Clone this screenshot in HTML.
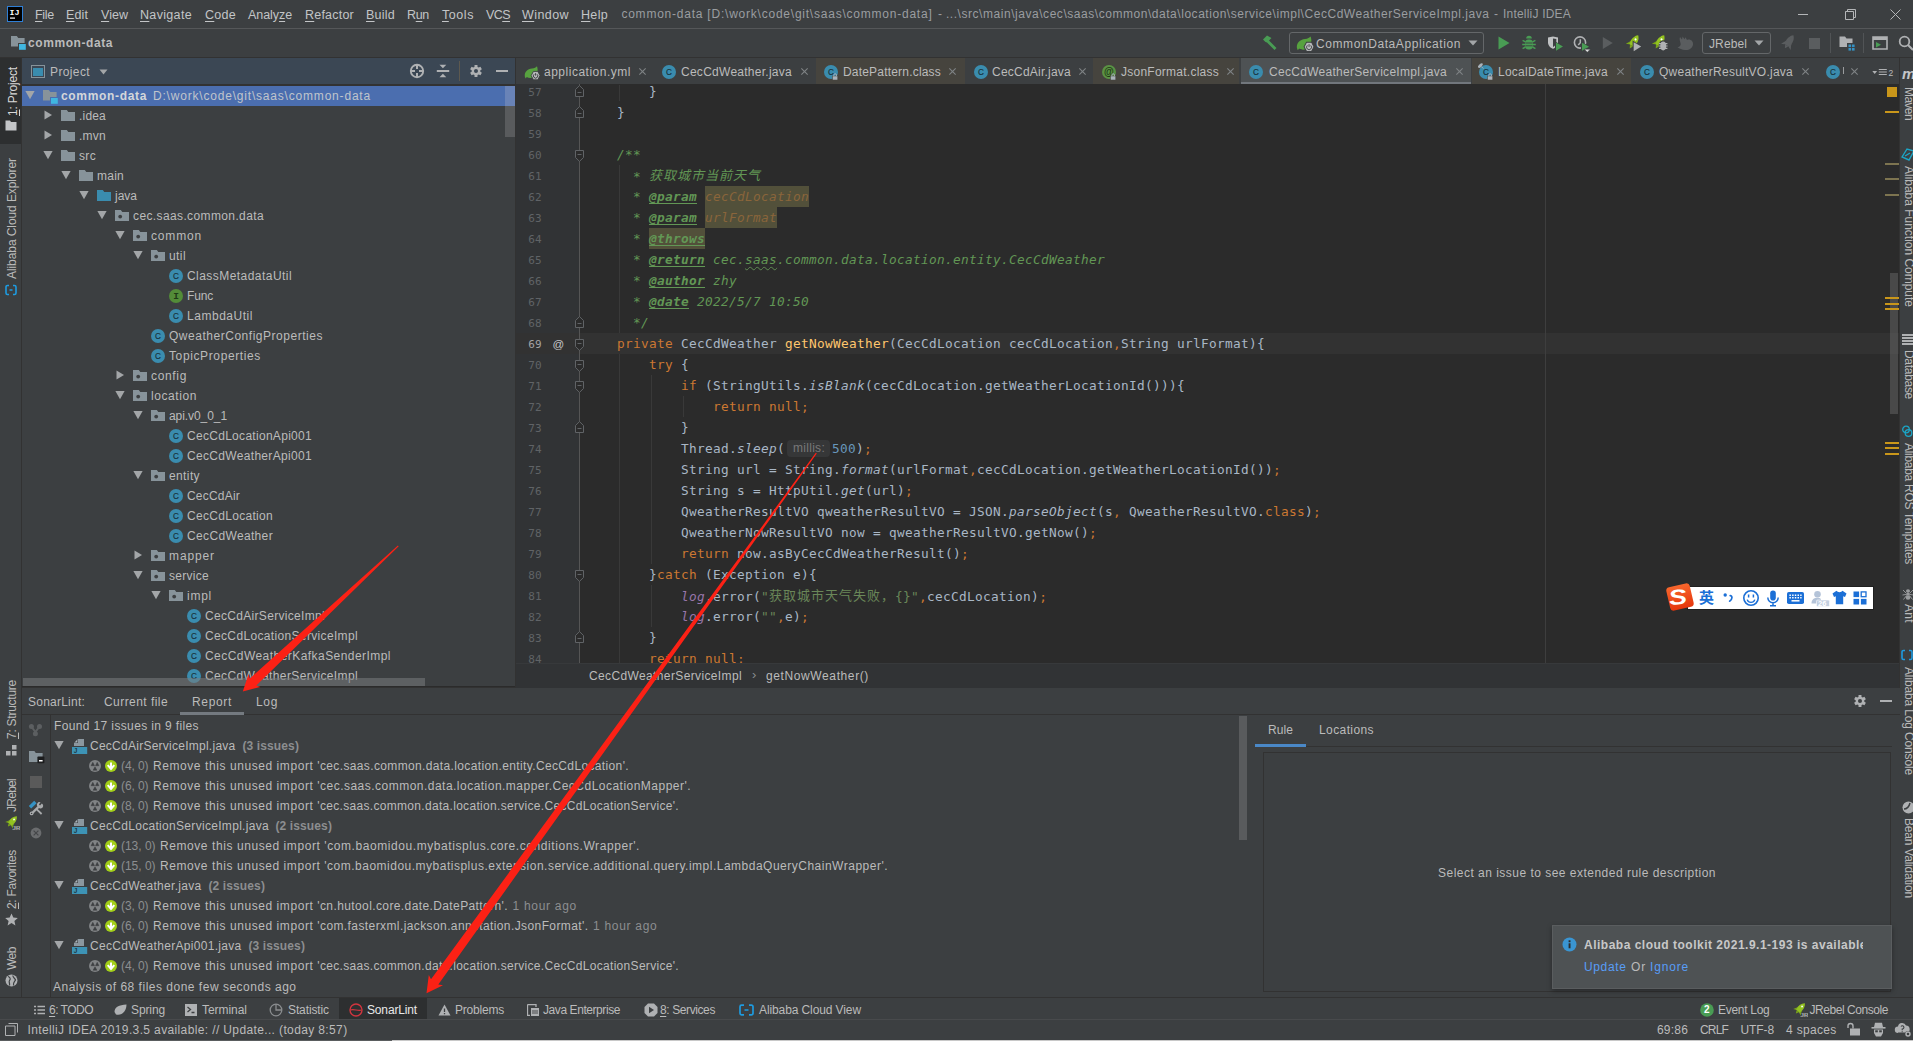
<!DOCTYPE html>
<html lang="en"><head><meta charset="utf-8"><title>IntelliJ IDEA - SonarLint</title><style>
html,body{margin:0;padding:0;background:#3c3f41;overflow:hidden}
body{width:1913px;height:1041px;position:relative;font-family:"Liberation Sans","Noto Sans CJK SC",sans-serif;font-size:13px;color:#bbbbbb}
.b{position:absolute;display:block}
.t{position:absolute;white-space:pre;display:block}
.u{font-family:"Liberation Sans","Noto Sans CJK SC",sans-serif;font-size:12px;color:#bbbbbb}
.m{color:#c3c5c7;font-size:12.5px}
.s{font-size:12px}
.bd{font-weight:bold}
u{text-decoration:underline;text-underline-offset:1.5px;text-decoration-thickness:1px}
.ln{font-family:"DejaVu Sans Mono","Liberation Mono",monospace;font-size:11px;letter-spacing:0px}
.cl{position:absolute;white-space:pre;height:21px;line-height:21px;font-family:"DejaVu Sans Mono","Liberation Mono","Noto Sans CJK SC",monospace;font-size:12.75px;letter-spacing:0.324px;color:#a9b7c6}
.k{color:#cc7832}.fn{color:#ffc66d}.it{font-style:italic}.sf{color:#9876aa;font-style:italic}.st{color:#6a8759}.nu{color:#6897bb}
.dc{color:#629755;font-style:italic}.dt{color:#629755;font-style:italic;font-weight:bold;text-decoration:underline;text-decoration-thickness:1px;text-underline-offset:2px}
.dp{color:#8a653b;font-style:italic}
.wv{text-decoration:underline wavy #5f8a52;text-decoration-thickness:1px;text-underline-offset:2px}
.cj{font-family:"Noto Sans CJK SC",sans-serif;font-size:13px;letter-spacing:1px;position:relative;top:-1.5px}
</style></head>
<body>

<svg width="0" height="0" style="position:absolute"><defs>
<symbol id="i-class" viewBox="0 0 16 16"><circle cx="8" cy="8" r="7" fill="#3a8cae"/><text x="8" y="10.9" text-anchor="middle" font-family="Liberation Sans,sans-serif" font-size="8.2" fill="#173039" stroke="#173039" stroke-width="0.15">C</text></symbol>
<symbol id="i-iface" viewBox="0 0 16 16"><circle cx="8" cy="8" r="7" fill="#538c38"/><text x="8" y="11.1" text-anchor="middle" font-family="Liberation Mono,monospace" font-weight="bold" font-size="9.5" fill="#1f3a16">I</text></symbol>
<symbol id="i-anno" viewBox="0 0 16 16"><circle cx="8" cy="8" r="7" fill="#5a9244"/><text x="8" y="11" text-anchor="middle" font-family="Liberation Sans,sans-serif" font-size="10" font-weight="bold" fill="#1f3a16">@</text></symbol>
<symbol id="i-folder" viewBox="0 0 16 16"><path d="M1,2 H6.8 L8.3,4 H15 V13 H1 Z" fill="#87939a"/></symbol>
<symbol id="i-srcfolder" viewBox="0 0 16 16"><path d="M1,2 H6.8 L8.3,4 H15 V13 H1 Z" fill="#3a8cae"/></symbol>
<symbol id="i-pkg" viewBox="0 0 16 16"><path d="M1,2 H6.8 L8.3,4 H15 V13 H1 Z" fill="#87939a"/><circle cx="6.2" cy="8.6" r="1.9" fill="#3c3f41"/></symbol>
<symbol id="i-module" viewBox="0 0 16 16"><path d="M1,2 H6.8 L8.3,4 H14.6 V12.4 H1 Z" fill="#87939a"/><rect x="8" y="9" width="8" height="7" fill="#3c3f41"/><rect x="9" y="10" width="6.8" height="5.8" fill="#40b6e0"/></symbol>
<symbol id="i-down" viewBox="0 0 10 10"><path d="M0.4,1 H9.6 L5,9.3 Z" fill="#a3a6a8"/></symbol>
<symbol id="i-right" viewBox="0 0 10 10"><path d="M1.5,0.5 V9.5 L9,5 Z" fill="#a3a6a8"/></symbol>
<symbol id="i-lock" viewBox="0 0 8 8"><rect x="0.6" y="3.4" width="6" height="4.6" fill="#a9b2ba" stroke="#46443e" stroke-width="0.6"/><path d="M2.1,3.4 V2.4 A1.5,1.5 0 0 1 5.1,2.4 V3.4" fill="none" stroke="#a9b2ba" stroke-width="1.1"/></symbol>
<symbol id="i-x" viewBox="0 0 10 10"><path d="M1.5,1.5 L8.5,8.5 M8.5,1.5 L1.5,8.5" stroke="#7f8385" stroke-width="1.2" fill="none"/></symbol>
<symbol id="i-gear" viewBox="0 0 16 16"><path fill="#afb1b3" fill-rule="evenodd" d="M6.24,3.32 L6.34,1.20 L9.66,1.20 L9.76,3.32 L11.17,4.13 L13.06,3.16 L14.72,6.04 L12.93,7.19 L12.93,8.81 L14.72,9.96 L13.06,12.84 L11.17,11.87 L9.76,12.68 L9.66,14.80 L6.34,14.80 L6.24,12.68 L4.83,11.87 L2.94,12.84 L1.28,9.96 L3.07,8.81 L3.07,7.19 L1.28,6.04 L2.94,3.16 L4.83,4.13 Z M8,5.7 A2.3,2.3 0 1 0 8,10.3 A2.3,2.3 0 1 0 8,5.7 Z"/></symbol>
<symbol id="i-fold-end" viewBox="0 0 9 12"><path d="M0.5,11.5 V4.5 L4.5,0.6 L8.5,4.5 V11.5 Z" fill="#2b2b2b" stroke="#606366" stroke-width="1"/><path d="M2.5,7.5 H6.5" stroke="#606366" stroke-width="1"/></symbol>
<symbol id="i-fold-start" viewBox="0 0 9 12"><path d="M0.5,0.5 V7.5 L4.5,11.4 L8.5,7.5 V0.5 Z" fill="#2b2b2b" stroke="#606366" stroke-width="1"/><path d="M2.5,4.5 H6.5" stroke="#606366" stroke-width="1"/></symbol>
<symbol id="i-jfile" viewBox="0 0 16 16"><path d="M6,1 H12 V8 H2 V5 Z" fill="#8b979f"/><path d="M2,5 H6 V1 Z" fill="#3c3f41"/><path d="M2.6,4.4 H5.4 V1.6 Z" fill="#a9b3b9"/><rect x="0" y="9" width="15.2" height="7" fill="#3d93b5"/><text x="3.6" y="15" text-anchor="middle" font-family="Liberation Sans,sans-serif" font-size="6.5" font-weight="bold" fill="#1d3a47">J</text></symbol>
<symbol id="i-sev" viewBox="0 0 12 12"><circle cx="6" cy="6" r="6" fill="#808385"/><path d="M3.8,2.3 L5.5,5.7 H2.1 Z M8.2,2.3 L9.9,5.7 H6.5 Z M6,6.8 L7.9,10.2 H4.1 Z" fill="#3c3f41" stroke="#3c3f41" stroke-width="0.5" stroke-linejoin="round"/></symbol>
<symbol id="i-minor" viewBox="0 0 12 12"><circle cx="6" cy="6" r="6" fill="#a2cf18"/><path d="M6,2.4 V8 M2.7,5.2 L6,8.9 L9.3,5.2" fill="none" stroke="#fff" stroke-width="2"/></symbol>
<symbol id="i-jr" viewBox="0 0 16 16"><g transform="translate(7.8,7) rotate(42) scale(0.95)"><path d="M0,-8 C2.9,-5.5 3.3,-2 3,3.2 H-3 C-3.3,-2 -2.9,-5.5 0,-8 Z" fill="#93c221"/><path d="M-2.6,-0.5 L-5.2,4.6 L-2.5,3.4 Z M2.6,-0.5 L5.2,4.6 L2.5,3.4 Z" fill="#7aa51a"/><path d="M-1.6,3.2 L0,6.2 L1.6,3.2 Z" fill="#7aa51a"/><circle cx="0" cy="-3.6" r="0.95" fill="#fff"/></g><text x="8.6" y="15.4" font-family="Liberation Sans,sans-serif" font-size="6" font-weight="bold" fill="#fff" stroke="#3c3f41" stroke-width="0.3">JR</text></symbol>
<symbol id="i-module-sel" viewBox="0 0 16 16"><path d="M1,2 H6.8 L8.3,4 H14.6 V12.4 H1 Z" fill="#87939a"/><rect x="8" y="9" width="8" height="7" fill="#4b6eaf"/><rect x="9" y="10" width="6.8" height="5.8" fill="#40b6e0"/></symbol>
</defs></svg>

<div class="b" style="left:0px;top:0px;width:1913px;height:28px;background:#3c3f41;"></div>
<div class="b" style="left:0px;top:28px;width:1913px;height:1px;background:#555759;"></div>
<svg class="b" style="left:7px;top:6px" width="16" height="16" viewBox="0 0 16 16"><rect x="0.5" y="0.5" width="15" height="15" fill="#000" stroke="#2f7fd6" stroke-width="1"/><text x="2.6" y="8.6" font-family="Liberation Mono,monospace" font-size="7.2" font-weight="bold" fill="#fff" textLength="10" lengthAdjust="spacingAndGlyphs">IJ</text><rect x="3" y="11.5" width="5" height="1.2" fill="#fff"/></svg>
<span class="t u m" style="left:35px;top:4.5px;height:20px;line-height:20px;letter-spacing:-0.289px;"><u>F</u>ile</span>
<span class="t u m" style="left:66px;top:4.5px;height:20px;line-height:20px;letter-spacing:0.113px;"><u>E</u>dit</span>
<span class="t u m" style="left:101px;top:4.5px;height:20px;line-height:20px;letter-spacing:0.027px;"><u>V</u>iew</span>
<span class="t u m" style="left:140px;top:4.5px;height:20px;line-height:20px;letter-spacing:0.332px;"><u>N</u>avigate</span>
<span class="t u m" style="left:205px;top:4.5px;height:20px;line-height:20px;letter-spacing:0.277px;"><u>C</u>ode</span>
<span class="t u m" style="left:248px;top:4.5px;height:20px;line-height:20px;letter-spacing:-0.069px;">Analy<u>z</u>e</span>
<span class="t u m" style="left:305px;top:4.5px;height:20px;line-height:20px;letter-spacing:0.219px;"><u>R</u>efactor</span>
<span class="t u m" style="left:366px;top:4.5px;height:20px;line-height:20px;letter-spacing:0.237px;"><u>B</u>uild</span>
<span class="t u m" style="left:407px;top:4.5px;height:20px;line-height:20px;letter-spacing:-0.312px;">R<u>u</u>n</span>
<span class="t u m" style="left:442px;top:4.5px;height:20px;line-height:20px;letter-spacing:0.562px;"><u>T</u>ools</span>
<span class="t u m" style="left:486px;top:4.5px;height:20px;line-height:20px;letter-spacing:-0.573px;">VC<u>S</u></span>
<span class="t u m" style="left:522px;top:4.5px;height:20px;line-height:20px;letter-spacing:0.419px;"><u>W</u>indow</span>
<span class="t u m" style="left:581px;top:4.5px;height:20px;line-height:20px;letter-spacing:0.320px;"><u>H</u>elp</span>
<span class="t u" style="left:621.4px;top:4.0px;height:20px;line-height:20px;letter-spacing:0.773px;color:#9a9da0">common-data [D:\work\code\git\saas\common-data]</span>
<span class="t u" style="left:938px;top:4.0px;height:20px;line-height:20px;color:#9a9da0">-</span>
<span class="t u" style="left:946px;top:4.0px;height:20px;line-height:20px;letter-spacing:0.541px;color:#9a9da0">...\src\main\java\cec\saas\common\data\location\service\impl\CecCdWeatherServiceImpl.java</span>
<span class="t u" style="left:1494px;top:4.0px;height:20px;line-height:20px;color:#9a9da0">-</span>
<span class="t u" style="left:1503px;top:4.0px;height:20px;line-height:20px;letter-spacing:0.203px;color:#9a9da0">IntelliJ IDEA</span>
<div class="b" style="left:1798px;top:14px;width:10px;height:1px;background:#b4b6b8;"></div>
<svg class="b" style="left:1845px;top:9px" width="11" height="11" viewBox="0 0 11 11"><path d="M0.5,2.5 H8.5 V10.5 H0.5 Z M2.5,2.5 V0.5 H10.5 V8.5 H8.5" fill="none" stroke="#b4b6b8" stroke-width="1"/></svg>
<svg class="b" style="left:1890px;top:9px" width="11" height="11" viewBox="0 0 11 11"><path d="M0.5,0.5 L10.5,10.5 M10.5,0.5 L0.5,10.5" fill="none" stroke="#b4b6b8" stroke-width="1"/></svg>
<div class="b" style="left:0px;top:29px;width:1913px;height:28px;background:#3c3f41;"></div>
<div class="b" style="left:0px;top:57px;width:1913px;height:1px;background:#323232;"></div>
<svg class="b" style="left:10px;top:34px;" width="16" height="16"><use href="#i-module"/></svg>
<span class="t u bd" style="left:28px;top:33.0px;height:20px;line-height:20px;letter-spacing:0.574px;">common-data</span>
<svg class="b" style="left:1261px;top:34px" width="17" height="17" viewBox="0 0 17 17"><path d="M2,5.5 L6,1.5 L10.5,4 L8,6.5 L15.5,14 L13.5,16 L6,8.5 L4.5,8 Z" fill="#499c54"/></svg>
<div class="b" style="left:1289px;top:32px;width:195px;height:22px;border:1px solid #646769;border-radius:3px;box-sizing:border-box"></div>
<svg class="b" style="left:1296px;top:36px" width="18" height="17" viewBox="0 0 16 15"><path d="M0.8,10.5 C0.3,6 3.5,3.2 8,2.6 C10.5,2.2 12,1.4 13,0.3 C14.6,5 13.2,9.4 9.6,11.3 C7.2,12.5 4.4,12.2 2.8,11 L1.6,12.6 Z" fill="#57a23f"/><path d="M9.4,5.4 L13.8,5.4 L16,9.6 L13.8,13.8 L9.4,13.8 L7.2,9.6 Z" fill="#b6b8ba" stroke="#3c3f41" stroke-width="0.9"/><path d="M11.6,7.2 V9.6 M10.1,8.3 A2.2,2.2 0 1 0 13.1,8.3" fill="none" stroke="#3c3f41" stroke-width="0.8"/></svg>
<span class="t u" style="left:1316px;top:33.5px;height:20px;line-height:20px;letter-spacing:0.584px;">CommonDataApplication</span>
<svg class="b" style="left:1468px;top:40px" width="10" height="6" viewBox="0 0 10 6"><path d="M0.5,0.5 H9.5 L5,5.5 Z" fill="#a3a6a8"/></svg>
<svg class="b" style="left:1498px;top:36px" width="12" height="14" viewBox="0 0 12 14"><path d="M0.5,0.5 L11.5,7 L0.5,13.5 Z" fill="#499c54"/></svg>
<svg class="b" style="left:1521px;top:35px" width="16" height="16" viewBox="0 0 16 16"><path d="M5.2,3.6 A2.8,2.8 0 0 1 10.8,3.6 Z" fill="#499c54"/><rect x="4" y="4.4" width="8" height="10" rx="3.6" fill="#499c54"/><path d="M1.6,5.4 L4.4,6.8 M1.2,9.4 H4.2 M1.6,13.6 L4.4,12 M14.4,5.4 L11.6,6.8 M14.8,9.4 H11.8 M14.4,13.6 L11.6,12" stroke="#499c54" stroke-width="1.5" fill="none"/><path d="M4.4,8 H11.6 M4.4,10.8 H11.6" stroke="#3c3f41" stroke-width="0.9"/></svg>
<svg class="b" style="left:1547px;top:35px" width="17" height="17" viewBox="0 0 17 17"><path d="M1,2.6 L6,1.4 L11,2.6 V7.5 C11,11 8,13 6,13.8 C4,13 1,11 1,7.5 Z" fill="#c0c2c4"/><path d="M6,3.4 L9.3,4.1 V7.6 C9.3,9.8 7.6,11.2 6,11.9 Z" fill="#3c3f41"/><path d="M8,6.2 L16.6,11.4 L8,16.6 Z" fill="#3c3f41"/><path d="M9,7.6 L16,11.6 L9,15.8 Z" fill="#499c54"/></svg>
<svg class="b" style="left:1573px;top:35px" width="18" height="18" viewBox="0 0 18 18"><circle cx="7" cy="7.5" r="5.6" fill="none" stroke="#afb1b3" stroke-width="1.6"/><path d="M7.3,4.2 V7.8 L5.2,10" fill="none" stroke="#afb1b3" stroke-width="1.5"/><path d="M8,6.4 L17,11.6 L8,16.8 Z" fill="#3c3f41"/><path d="M9,7.8 L16,11.8 L9,15.8 Z" fill="#499c54"/><path d="M11.2,14.2 H17.4 L14.3,17.2 Z" fill="#dfe0e1" stroke="#3c3f41" stroke-width="0.5"/></svg>
<svg class="b" style="left:1602px;top:37px" width="11" height="12" viewBox="0 0 11 12"><path d="M0.8,0 L10.8,6 L0.8,12 Z" fill="#5a5d5f"/></svg>
<svg class="b" style="left:1624px;top:34px" width="18" height="18" viewBox="0 0 18 18"><g transform="translate(9.4,8.7) rotate(33) scale(1.1)"><path d="M0,-8 C2.9,-5.5 3.3,-2 3,3.2 H-3 C-3.3,-2 -2.9,-5.5 0,-8 Z" fill="#93c221"/><path d="M-2.6,-0.5 L-5.2,4.6 L-2.5,3.4 Z M2.6,-0.5 L5.2,4.6 L2.5,3.4 Z" fill="#7aa51a"/><path d="M-1.6,3.2 L0,6.2 L1.6,3.2 Z" fill="#7aa51a"/><circle cx="0" cy="-3.6" r="0.95" fill="#fff"/></g><path d="M8.6,6.6 L18,12.4 L8.6,18 Z" fill="#3c3f41"/><path d="M9.7,8.2 L17.2,12.6 L9.7,17.2 Z" fill="#afb1b3"/></svg>
<svg class="b" style="left:1650px;top:34px" width="18" height="18" viewBox="0 0 18 18"><g transform="translate(9.4,8.7) rotate(33) scale(1.1)"><path d="M0,-8 C2.9,-5.5 3.3,-2 3,3.2 H-3 C-3.3,-2 -2.9,-5.5 0,-8 Z" fill="#93c221"/><path d="M-2.6,-0.5 L-5.2,4.6 L-2.5,3.4 Z M2.6,-0.5 L5.2,4.6 L2.5,3.4 Z" fill="#7aa51a"/><path d="M-1.6,3.2 L0,6.2 L1.6,3.2 Z" fill="#7aa51a"/><circle cx="0" cy="-3.6" r="0.95" fill="#fff"/></g><ellipse cx="13.2" cy="11.8" rx="4.6" ry="5.6" fill="#3c3f41"/><ellipse cx="13.2" cy="12" rx="2.9" ry="4.4" fill="#afb1b3"/><path d="M9,9.6 H17.4 M8.8,12 H17.6 M9,14.4 H17.4" stroke="#afb1b3" stroke-width="1.1"/></svg>
<svg class="b" style="left:1677px;top:35px" width="17" height="16" viewBox="0 0 17 16"><path d="M3,2 L5,4.5 L5.6,1.6 L7.5,4.2 L8.5,2.2 L10,5 C13,3.5 16.5,6 16,9.5 C15.5,13 12,15.5 8,15 C5,14.6 2.5,13.5 0.5,12.2 C3,11.6 4,10.5 3.6,8.5 C3.3,6.5 2,4.5 3,2 Z" fill="#5a5d5f"/></svg>
<div class="b" style="left:1702px;top:32px;width:69px;height:22px;border:1px solid #646769;border-radius:3px;box-sizing:border-box"></div>
<span class="t u" style="left:1709px;top:33.5px;height:20px;line-height:20px;letter-spacing:0.107px;">JRebel</span>
<svg class="b" style="left:1754px;top:40px" width="10" height="6" viewBox="0 0 10 6"><path d="M0.5,0.5 H9.5 L5,5.5 Z" fill="#a3a6a8"/></svg>
<svg class="b" style="left:1779px;top:34px" width="18" height="18" viewBox="0 0 18 18"><g transform="translate(9.6,8.6) rotate(33) scale(1.1)"><path d="M0,-8 C2.9,-5.5 3.3,-2 3,3.2 H-3 C-3.3,-2 -2.9,-5.5 0,-8 Z" fill="#5a5d5f"/><path d="M-2.6,-0.5 L-5.2,4.6 L-2.5,3.4 Z M2.6,-0.5 L5.2,4.6 L2.5,3.4 Z" fill="#5a5d5f"/><path d="M-1.6,3.2 L0,6.2 L1.6,3.2 Z" fill="#5a5d5f"/><circle cx="0" cy="-3.6" r="0.95" fill="#5a5d5f"/></g></svg>
<div class="b" style="left:1809px;top:38px;width:11px;height:11px;background:#5a5d5f;"></div>
<div class="b" style="left:1830px;top:33px;width:1px;height:20px;background:#515456;"></div>
<svg class="b" style="left:1839px;top:35px" width="16" height="16" viewBox="0 0 16 16"><path d="M0.5,1.5 H6 L7.5,3.5 H13.5 V8 H8 V12 H0.5 Z" fill="#afb1b3"/><rect x="9.5" y="9.5" width="2.6" height="2.6" fill="#3592c4"/><rect x="13" y="9.5" width="2.6" height="2.6" fill="#3592c4"/><rect x="9.5" y="13" width="2.6" height="2.6" fill="#3592c4"/><rect x="13" y="13" width="2.6" height="2.6" fill="#3592c4"/></svg>
<div class="b" style="left:1863px;top:33px;width:1px;height:20px;background:#515456;"></div>
<svg class="b" style="left:1872px;top:35px" width="16" height="16" viewBox="0 0 16 16"><path d="M1,2 H15 V14 H1 Z" fill="none" stroke="#afb1b3" stroke-width="1.6"/><rect x="1" y="2" width="14" height="3" fill="#afb1b3"/><path d="M4,7 L9,9.8 L4,12.5 Z" fill="#499c54"/></svg>
<svg class="b" style="left:1898px;top:35px" width="16" height="16" viewBox="0 0 16 16"><circle cx="6.5" cy="6.5" r="4.8" fill="none" stroke="#afb1b3" stroke-width="1.8"/><path d="M10,10 L15,15" stroke="#afb1b3" stroke-width="2"/></svg>
<div class="b" style="left:0px;top:58px;width:22px;height:939px;background:#3c3f41;"></div>
<div class="b" style="left:21px;top:58px;width:1px;height:939px;background:#323232;"></div>
<div class="b" style="left:0px;top:58px;width:21px;height:86px;background:#2d2f30;"></div>
<span class="t u" style="left:2.5px;top:116px;height:20px;line-height:20px;transform-origin:0 0;transform:rotate(-90deg);letter-spacing:-0.170px;color:#d8d8d8"><u>1</u>: Project</span>
<svg class="b" style="left:5px;top:120px" width="12" height="11" viewBox="0 0 12 11"><path d="M0.5,0.5 H5 L6,2 H11.5 V10.5 H0.5 Z" fill="#c4c6c8"/></svg>
<span class="t u" style="left:2px;top:279px;height:20px;line-height:20px;transform-origin:0 0;transform:rotate(-90deg);letter-spacing:-0.080px;">Alibaba Cloud Explorer</span>
<svg class="b" style="left:5px;top:284px" width="12" height="12" viewBox="0 0 12 12"><path d="M4,1.5 H2.5 A1.5,1.5 0 0 0 1,3 V9 A1.5,1.5 0 0 0 2.5,10.5 H4 M8,1.5 H9.5 A1.5,1.5 0 0 1 11,3 V9 A1.5,1.5 0 0 1 9.5,10.5 H8 M4.5,6 H7.5" fill="none" stroke="#1e9be0" stroke-width="1.6"/></svg>
<span class="t u" style="left:2px;top:739px;height:20px;line-height:20px;transform-origin:0 0;transform:rotate(-90deg);letter-spacing:-0.254px;"><u>7</u>: Structure</span>
<svg class="b" style="left:6px;top:745px" width="11" height="11" viewBox="0 0 11 11"><rect x="6" y="0" width="4.5" height="4.5" fill="#afb1b3"/><rect x="0" y="6" width="4.5" height="4.5" fill="#afb1b3"/><rect x="6" y="6" width="4.5" height="4.5" fill="#afb1b3"/></svg>
<span class="t u" style="left:2px;top:812px;height:20px;line-height:20px;transform-origin:0 0;transform:rotate(-90deg);letter-spacing:-0.727px;">JRebel</span>
<svg class="b" style="left:4px;top:815px;" width="16" height="16"><use href="#i-jr"/></svg>
<span class="t u" style="left:2px;top:909px;height:20px;line-height:20px;transform-origin:0 0;transform:rotate(-90deg);letter-spacing:-0.309px;"><u>2</u>: Favorites</span>
<svg class="b" style="left:5px;top:913px" width="13" height="13" viewBox="0 0 13 13"><path d="M6.5,0.5 L8.3,4.6 L12.8,5 L9.4,8 L10.4,12.4 L6.5,10.1 L2.6,12.4 L3.6,8 L0.2,5 L4.7,4.6 Z" fill="#afb1b3"/></svg>
<span class="t u" style="left:2px;top:970px;height:20px;line-height:20px;transform-origin:0 0;transform:rotate(-90deg);letter-spacing:-0.490px;">Web</span>
<svg class="b" style="left:5px;top:974px" width="13" height="13" viewBox="0 0 13 13"><circle cx="6.5" cy="6.5" r="6" fill="#afb1b3"/><path d="M3,2.5 C5,3 6,5 4.5,6.5 C3.5,8 5,9 4.5,11.5 M8,1.5 C7.5,3.5 10,4 10.5,6 C9.5,8 8,8.5 8.5,11.5" stroke="#3c3f41" stroke-width="1.2" fill="none"/></svg>
<div class="b" style="left:22px;top:58px;width:493px;height:26px;background:#3b4754;"></div>
<div class="b" style="left:22px;top:84px;width:493px;height:2px;background:#323232;"></div>
<div class="b" style="left:22px;top:86px;width:493px;height:601px;background:#3c3f41;"></div>
<div class="b" style="left:515px;top:58px;width:1px;height:629px;background:#323232;"></div>
<svg class="b" style="left:31px;top:65px" width="14" height="14" viewBox="0 0 14 14"><rect x="0.5" y="0.5" width="13" height="12" fill="none" stroke="#87939a" stroke-width="1"/><rect x="2" y="3" width="10" height="8" fill="#3a8cae"/></svg>
<span class="t u" style="left:50px;top:62.0px;height:20px;line-height:20px;letter-spacing:0.377px;">Project</span>
<svg class="b" style="left:99px;top:69px" width="9" height="6" viewBox="0 0 9 6"><path d="M0.5,0.5 H8.5 L4.5,5.5 Z" fill="#a3a6a8"/></svg>
<svg class="b" style="left:409px;top:63px" width="16" height="16" viewBox="0 0 16 16"><circle cx="8" cy="8" r="6.2" fill="none" stroke="#afb1b3" stroke-width="1.9"/><path d="M8,1.5 V6 M8,10 V14.5 M1.5,8 H6 M10,8 H14.5" stroke="#afb1b3" stroke-width="2"/></svg>
<svg class="b" style="left:436px;top:64px" width="14" height="14" viewBox="0 0 14 14"><rect x="0.8" y="6" width="12.4" height="2" fill="#afb1b3"/><path d="M3.5,0.8 H10.3 L6.9,4.2 Z M3.5,13.2 H10.3 L6.9,9.8 Z" fill="#afb1b3"/></svg>
<div class="b" style="left:459px;top:61px;width:1px;height:20px;background:#5d594f;"></div>
<svg class="b" style="left:469px;top:64px;" width="14" height="14"><use href="#i-gear"/></svg>
<div class="b" style="left:496px;top:70px;width:12px;height:2px;background:#afb1b3;"></div>
<div class="b" style="left:22px;top:86px;width:483px;height:20px;background:#4b6eaf;"></div>
<svg class="b" style="left:25px;top:90.0px;" width="10" height="10"><use href="#i-down"/></svg>
<svg class="b" style="left:42px;top:88.0px;" width="16" height="16"><use href="#i-module-sel"/></svg>
<span class="t u bd" style="left:61px;top:85.5px;height:20px;line-height:20px;letter-spacing:0.665px;color:#d4d7da">common-data</span>
<span class="t u" style="left:153px;top:85.5px;height:20px;line-height:20px;letter-spacing:0.805px;color:#c0c5cc">D:\work\code\git\saas\common-data</span>
<svg class="b" style="left:43px;top:110.0px;" width="10" height="10"><use href="#i-right"/></svg>
<svg class="b" style="left:60px;top:108.0px;" width="16" height="16"><use href="#i-folder"/></svg>
<span class="t u" style="left:79px;top:105.5px;height:20px;line-height:20px;letter-spacing:0.194px;">.idea</span>
<svg class="b" style="left:43px;top:130.0px;" width="10" height="10"><use href="#i-right"/></svg>
<svg class="b" style="left:60px;top:128.0px;" width="16" height="16"><use href="#i-folder"/></svg>
<span class="t u" style="left:79px;top:125.5px;height:20px;line-height:20px;letter-spacing:0.246px;">.mvn</span>
<svg class="b" style="left:43px;top:150.0px;" width="10" height="10"><use href="#i-down"/></svg>
<svg class="b" style="left:60px;top:148.0px;" width="16" height="16"><use href="#i-folder"/></svg>
<span class="t u" style="left:79px;top:145.5px;height:20px;line-height:20px;letter-spacing:0.333px;">src</span>
<svg class="b" style="left:61px;top:170.0px;" width="10" height="10"><use href="#i-down"/></svg>
<svg class="b" style="left:78px;top:168.0px;" width="16" height="16"><use href="#i-folder"/></svg>
<span class="t u" style="left:97px;top:165.5px;height:20px;line-height:20px;letter-spacing:0.246px;">main</span>
<svg class="b" style="left:79px;top:190.0px;" width="10" height="10"><use href="#i-down"/></svg>
<svg class="b" style="left:96px;top:188.0px;" width="16" height="16"><use href="#i-srcfolder"/></svg>
<span class="t u" style="left:115px;top:185.5px;height:20px;line-height:20px;letter-spacing:-0.004px;">java</span>
<svg class="b" style="left:97px;top:210.0px;" width="10" height="10"><use href="#i-down"/></svg>
<svg class="b" style="left:114px;top:208.0px;" width="16" height="16"><use href="#i-pkg"/></svg>
<span class="t u" style="left:133px;top:205.5px;height:20px;line-height:20px;letter-spacing:0.380px;">cec.saas.common.data</span>
<svg class="b" style="left:115px;top:230.0px;" width="10" height="10"><use href="#i-down"/></svg>
<svg class="b" style="left:132px;top:228.0px;" width="16" height="16"><use href="#i-pkg"/></svg>
<span class="t u" style="left:151px;top:225.5px;height:20px;line-height:20px;letter-spacing:0.831px;">common</span>
<svg class="b" style="left:133px;top:250.0px;" width="10" height="10"><use href="#i-down"/></svg>
<svg class="b" style="left:150px;top:248.0px;" width="16" height="16"><use href="#i-pkg"/></svg>
<span class="t u" style="left:169px;top:245.5px;height:20px;line-height:20px;letter-spacing:0.414px;">util</span>
<svg class="b" style="left:168px;top:268.0px;" width="16" height="16"><use href="#i-class"/></svg>
<span class="t u" style="left:187px;top:265.5px;height:20px;line-height:20px;letter-spacing:0.449px;">ClassMetadataUtil</span>
<svg class="b" style="left:168px;top:288.0px;" width="16" height="16"><use href="#i-iface"/></svg>
<span class="t u" style="left:187px;top:285.5px;height:20px;line-height:20px;letter-spacing:-0.172px;">Func</span>
<svg class="b" style="left:168px;top:308.0px;" width="16" height="16"><use href="#i-class"/></svg>
<span class="t u" style="left:187px;top:305.5px;height:20px;line-height:20px;letter-spacing:0.530px;">LambdaUtil</span>
<svg class="b" style="left:150px;top:328.0px;" width="16" height="16"><use href="#i-class"/></svg>
<span class="t u" style="left:169px;top:325.5px;height:20px;line-height:20px;letter-spacing:0.525px;">QweatherConfigProperties</span>
<svg class="b" style="left:150px;top:348.0px;" width="16" height="16"><use href="#i-class"/></svg>
<span class="t u" style="left:169px;top:345.5px;height:20px;line-height:20px;letter-spacing:0.619px;">TopicProperties</span>
<svg class="b" style="left:115px;top:370.0px;" width="10" height="10"><use href="#i-right"/></svg>
<svg class="b" style="left:132px;top:368.0px;" width="16" height="16"><use href="#i-pkg"/></svg>
<span class="t u" style="left:151px;top:365.5px;height:20px;line-height:20px;letter-spacing:0.661px;">config</span>
<svg class="b" style="left:115px;top:390.0px;" width="10" height="10"><use href="#i-down"/></svg>
<svg class="b" style="left:132px;top:388.0px;" width="16" height="16"><use href="#i-pkg"/></svg>
<span class="t u" style="left:151px;top:385.5px;height:20px;line-height:20px;letter-spacing:0.578px;">location</span>
<svg class="b" style="left:133px;top:410.0px;" width="10" height="10"><use href="#i-down"/></svg>
<svg class="b" style="left:150px;top:408.0px;" width="16" height="16"><use href="#i-pkg"/></svg>
<span class="t u" style="left:169px;top:405.5px;height:20px;line-height:20px;letter-spacing:-0.072px;">api.v0_0_1</span>
<svg class="b" style="left:168px;top:428.0px;" width="16" height="16"><use href="#i-class"/></svg>
<span class="t u" style="left:187px;top:425.5px;height:20px;line-height:20px;letter-spacing:0.294px;">CecCdLocationApi001</span>
<svg class="b" style="left:168px;top:448.0px;" width="16" height="16"><use href="#i-class"/></svg>
<span class="t u" style="left:187px;top:445.5px;height:20px;line-height:20px;letter-spacing:0.323px;">CecCdWeatherApi001</span>
<svg class="b" style="left:133px;top:470.0px;" width="10" height="10"><use href="#i-down"/></svg>
<svg class="b" style="left:150px;top:468.0px;" width="16" height="16"><use href="#i-pkg"/></svg>
<span class="t u" style="left:169px;top:465.5px;height:20px;line-height:20px;letter-spacing:0.385px;">entity</span>
<svg class="b" style="left:168px;top:488.0px;" width="16" height="16"><use href="#i-class"/></svg>
<span class="t u" style="left:187px;top:485.5px;height:20px;line-height:20px;letter-spacing:0.205px;">CecCdAir</span>
<svg class="b" style="left:168px;top:508.0px;" width="16" height="16"><use href="#i-class"/></svg>
<span class="t u" style="left:187px;top:505.5px;height:20px;line-height:20px;letter-spacing:0.303px;">CecCdLocation</span>
<svg class="b" style="left:168px;top:528.0px;" width="16" height="16"><use href="#i-class"/></svg>
<span class="t u" style="left:187px;top:525.5px;height:20px;line-height:20px;letter-spacing:0.348px;">CecCdWeather</span>
<svg class="b" style="left:133px;top:550.0px;" width="10" height="10"><use href="#i-right"/></svg>
<svg class="b" style="left:150px;top:548.0px;" width="16" height="16"><use href="#i-pkg"/></svg>
<span class="t u" style="left:169px;top:545.5px;height:20px;line-height:20px;letter-spacing:0.885px;">mapper</span>
<svg class="b" style="left:133px;top:570.0px;" width="10" height="10"><use href="#i-down"/></svg>
<svg class="b" style="left:150px;top:568.0px;" width="16" height="16"><use href="#i-pkg"/></svg>
<span class="t u" style="left:169px;top:565.5px;height:20px;line-height:20px;letter-spacing:0.283px;">service</span>
<svg class="b" style="left:151px;top:590.0px;" width="10" height="10"><use href="#i-down"/></svg>
<svg class="b" style="left:168px;top:588.0px;" width="16" height="16"><use href="#i-pkg"/></svg>
<span class="t u" style="left:187px;top:585.5px;height:20px;line-height:20px;letter-spacing:0.746px;">impl</span>
<svg class="b" style="left:186px;top:608.0px;" width="16" height="16"><use href="#i-class"/></svg>
<span class="t u" style="left:205px;top:605.5px;height:20px;line-height:20px;letter-spacing:0.314px;">CecCdAirServiceImpl</span>
<svg class="b" style="left:186px;top:628.0px;" width="16" height="16"><use href="#i-class"/></svg>
<span class="t u" style="left:205px;top:625.5px;height:20px;line-height:20px;letter-spacing:0.344px;">CecCdLocationServiceImpl</span>
<svg class="b" style="left:186px;top:648.0px;" width="16" height="16"><use href="#i-class"/></svg>
<span class="t u" style="left:205px;top:645.5px;height:20px;line-height:20px;letter-spacing:0.449px;">CecCdWeatherKafkaSenderImpl</span>
<svg class="b" style="left:186px;top:668.0px;" width="16" height="16"><use href="#i-class"/></svg>
<span class="t u" style="left:205px;top:665.5px;height:20px;line-height:20px;letter-spacing:0.370px;">CecCdWeatherServiceImpl</span>
<div class="b" style="left:505px;top:86px;width:10px;height:20px;background:#6983b7;"></div>
<div class="b" style="left:505px;top:106px;width:10px;height:31px;background:#595b5d;"></div>
<div class="b" style="left:23px;top:678px;width:402px;height:8px;background:rgba(120,123,125,0.55);"></div>
<div class="b" style="left:22px;top:686px;width:493px;height:1px;background:#2b2b2b;"></div>
<div class="b" style="left:516px;top:58px;width:1384px;height:26px;background:#3c3f41;"></div>
<svg class="b" style="left:524px;top:66px" width="16" height="15" viewBox="0 0 16 15"><path d="M0.8,10.5 C0.3,6 3.5,3.2 8,2.6 C10.5,2.2 12,1.4 13,0.3 C14.6,5 13.2,9.4 9.6,11.3 C7.2,12.5 4.4,12.2 2.8,11 L1.6,12.6 Z" fill="#57a23f"/><path d="M9.4,5.4 L13.8,5.4 L16,9.6 L13.8,13.8 L9.4,13.8 L7.2,9.6 Z" fill="#b6b8ba" stroke="#3c3f41" stroke-width="0.9"/><path d="M11.6,7.2 V9.6 M10.1,8.3 A2.2,2.2 0 1 0 13.1,8.3" fill="none" stroke="#3c3f41" stroke-width="1"/></svg>
<span class="t u" style="left:544px;top:62.0px;height:20px;line-height:20px;letter-spacing:0.508px;">application.yml</span>
<svg class="b" style="left:638px;top:67px;" width="9" height="9"><use href="#i-x"/></svg>
<svg class="b" style="left:661px;top:64px;" width="16" height="16"><use href="#i-class"/></svg>
<span class="t u" style="left:681px;top:62.0px;height:20px;line-height:20px;letter-spacing:0.265px;">CecCdWeather.java</span>
<svg class="b" style="left:800px;top:67px;" width="9" height="9"><use href="#i-x"/></svg>
<div class="b" style="left:816px;top:58px;width:149px;height:26px;background:#46443e;"></div>
<svg class="b" style="left:823px;top:64px;" width="16" height="16"><use href="#i-class"/></svg>
<svg class="b" style="left:832px;top:73px;" width="7" height="7"><use href="#i-lock"/></svg>
<span class="t u" style="left:843px;top:62.0px;height:20px;line-height:20px;letter-spacing:0.193px;">DatePattern.class</span>
<svg class="b" style="left:948px;top:67px;" width="9" height="9"><use href="#i-x"/></svg>
<svg class="b" style="left:973px;top:64px;" width="16" height="16"><use href="#i-class"/></svg>
<span class="t u" style="left:992px;top:62.0px;height:20px;line-height:20px;letter-spacing:0.228px;">CecCdAir.java</span>
<svg class="b" style="left:1078px;top:67px;" width="9" height="9"><use href="#i-x"/></svg>
<div class="b" style="left:1093px;top:58px;width:146px;height:26px;background:#46443e;"></div>
<svg class="b" style="left:1101px;top:64px;" width="16" height="16"><use href="#i-anno"/></svg>
<svg class="b" style="left:1110px;top:73px;" width="7" height="7"><use href="#i-lock"/></svg>
<span class="t u" style="left:1121px;top:62.0px;height:20px;line-height:20px;letter-spacing:0.248px;">JsonFormat.class</span>
<svg class="b" style="left:1226px;top:67px;" width="9" height="9"><use href="#i-x"/></svg>
<div class="b" style="left:1241px;top:58px;width:230px;height:26px;background:#4e5254;"></div>
<svg class="b" style="left:1248px;top:64px;" width="16" height="16"><use href="#i-class"/></svg>
<span class="t u" style="left:1269px;top:62.0px;height:20px;line-height:20px;letter-spacing:0.291px;">CecCdWeatherServiceImpl.java</span>
<svg class="b" style="left:1455px;top:67px;" width="9" height="9"><use href="#i-x"/></svg>
<div class="b" style="left:1472px;top:58px;width:159px;height:26px;background:#46443e;"></div>
<svg class="b" style="left:1478px;top:64px;" width="16" height="16"><use href="#i-class"/></svg>
<svg class="b" style="left:1487px;top:73px;" width="7" height="7"><use href="#i-lock"/></svg>
<svg class="b" style="left:1477px;top:62px" width="8" height="8" viewBox="0 0 8 8"><ellipse cx="3.4" cy="3.6" rx="3" ry="1.5" transform="rotate(-42 3.4 3.6)" fill="#a9b2ba"/><path d="M4.6,4.8 L6.4,6.6" stroke="#a9b2ba" stroke-width="0.9"/></svg>
<span class="t u" style="left:1498px;top:62.0px;height:20px;line-height:20px;letter-spacing:0.244px;">LocalDateTime.java</span>
<svg class="b" style="left:1616px;top:67px;" width="9" height="9"><use href="#i-x"/></svg>
<svg class="b" style="left:1639px;top:64px;" width="16" height="16"><use href="#i-class"/></svg>
<span class="t u" style="left:1659px;top:62.0px;height:20px;line-height:20px;letter-spacing:0.251px;">QweatherResultVO.java</span>
<svg class="b" style="left:1801px;top:67px;" width="9" height="9"><use href="#i-x"/></svg>
<svg class="b" style="left:1825px;top:64px;" width="16" height="16"><use href="#i-class"/></svg>
<div class="b" style="left:1843px;top:67px;width:1px;height:7px;background:#9a9c9e;"></div>
<svg class="b" style="left:1850px;top:67px;" width="9" height="9"><use href="#i-x"/></svg>
<div class="b" style="left:1241px;top:82px;width:230px;height:3px;background:#72777d;"></div>
<svg class="b" style="left:1872px;top:66px" width="16" height="12" viewBox="0 0 16 12"><path d="M0.3,5 H5.1 L2.7,8 Z" fill="#afb1b3"/><path d="M6.8,3.5 H14.8 M6.8,6 H14.8 M6.8,8.5 H14.8" stroke="#afb1b3" stroke-width="1.1"/></svg>
<span class="t u" style="left:1888.5px;top:62.5px;height:20px;line-height:20px;font-size:8.5px">2</span>
<div class="b" style="left:516px;top:84px;width:1384px;height:579px;background:#2b2b2b;overflow:hidden"></div>
<div class="b" style="left:516px;top:84px;width:63px;height:579px;background:#313335;"></div>
<div class="b" style="left:579px;top:84px;width:1px;height:579px;background:#555555;"></div>
<div class="b" style="left:580px;top:333px;width:1319px;height:21px;background:#323232;"></div>
<div class="b" style="left:516px;top:333px;width:63px;height:21px;background:#323232;"></div>
<div class="b" style="left:1545px;top:84px;width:1px;height:579px;background:#3e3e3e;"></div>
<div class="b" style="left:619px;top:85px;width:1px;height:16px;background:#393939;"></div>
<div class="b" style="left:619px;top:165px;width:1px;height:168px;background:#393939;"></div>
<div class="b" style="left:619px;top:354px;width:1px;height:309px;background:#393939;"></div>
<div class="b" style="left:651px;top:375px;width:1px;height:189px;background:#393939;"></div>
<div class="b" style="left:683px;top:396px;width:1px;height:21px;background:#393939;"></div>
<div class="b" style="left:651px;top:585px;width:1px;height:42px;background:#393939;"></div>
<span class="t ln" style="left:528.3px;top:81.5px;height:21px;line-height:21px;color:#606366">57</span>
<span class="t ln" style="left:528.3px;top:102.5px;height:21px;line-height:21px;color:#606366">58</span>
<span class="t ln" style="left:528.3px;top:123.5px;height:21px;line-height:21px;color:#606366">59</span>
<span class="t ln" style="left:528.3px;top:144.5px;height:21px;line-height:21px;color:#606366">60</span>
<span class="t ln" style="left:528.3px;top:165.5px;height:21px;line-height:21px;color:#606366">61</span>
<span class="t ln" style="left:528.3px;top:186.5px;height:21px;line-height:21px;color:#606366">62</span>
<span class="t ln" style="left:528.3px;top:207.5px;height:21px;line-height:21px;color:#606366">63</span>
<span class="t ln" style="left:528.3px;top:228.5px;height:21px;line-height:21px;color:#606366">64</span>
<span class="t ln" style="left:528.3px;top:249.5px;height:21px;line-height:21px;color:#606366">65</span>
<span class="t ln" style="left:528.3px;top:270.5px;height:21px;line-height:21px;color:#606366">66</span>
<span class="t ln" style="left:528.3px;top:291.5px;height:21px;line-height:21px;color:#606366">67</span>
<span class="t ln" style="left:528.3px;top:312.5px;height:21px;line-height:21px;color:#606366">68</span>
<span class="t ln" style="left:528.3px;top:333.5px;height:21px;line-height:21px;color:#a4a3a3">69</span>
<span class="t ln" style="left:528.3px;top:354.5px;height:21px;line-height:21px;color:#606366">70</span>
<span class="t ln" style="left:528.3px;top:375.5px;height:21px;line-height:21px;color:#606366">71</span>
<span class="t ln" style="left:528.3px;top:396.5px;height:21px;line-height:21px;color:#606366">72</span>
<span class="t ln" style="left:528.3px;top:417.5px;height:21px;line-height:21px;color:#606366">73</span>
<span class="t ln" style="left:528.3px;top:438.5px;height:21px;line-height:21px;color:#606366">74</span>
<span class="t ln" style="left:528.3px;top:459.5px;height:21px;line-height:21px;color:#606366">75</span>
<span class="t ln" style="left:528.3px;top:480.5px;height:21px;line-height:21px;color:#606366">76</span>
<span class="t ln" style="left:528.3px;top:501.5px;height:21px;line-height:21px;color:#606366">77</span>
<span class="t ln" style="left:528.3px;top:522.5px;height:21px;line-height:21px;color:#606366">78</span>
<span class="t ln" style="left:528.3px;top:543.5px;height:21px;line-height:21px;color:#606366">79</span>
<span class="t ln" style="left:528.3px;top:564.5px;height:21px;line-height:21px;color:#606366">80</span>
<span class="t ln" style="left:528.3px;top:585.5px;height:21px;line-height:21px;color:#606366">81</span>
<span class="t ln" style="left:528.3px;top:606.5px;height:21px;line-height:21px;color:#606366">82</span>
<span class="t ln" style="left:528.3px;top:627.5px;height:21px;line-height:21px;color:#606366">83</span>
<span class="t ln" style="left:528.3px;top:648.5px;height:21px;line-height:21px;color:#606366">84</span>
<svg class="b" style="left:575px;top:85px;" width="9" height="12"><use href="#i-fold-end"/></svg>
<svg class="b" style="left:575px;top:106px;" width="9" height="12"><use href="#i-fold-end"/></svg>
<svg class="b" style="left:575px;top:150px;" width="9" height="12"><use href="#i-fold-start"/></svg>
<svg class="b" style="left:575px;top:316px;" width="9" height="12"><use href="#i-fold-end"/></svg>
<svg class="b" style="left:575px;top:339px;" width="9" height="12"><use href="#i-fold-start"/></svg>
<svg class="b" style="left:575px;top:360px;" width="9" height="12"><use href="#i-fold-start"/></svg>
<svg class="b" style="left:575px;top:381px;" width="9" height="12"><use href="#i-fold-start"/></svg>
<svg class="b" style="left:575px;top:421px;" width="9" height="12"><use href="#i-fold-end"/></svg>
<svg class="b" style="left:575px;top:570px;" width="9" height="12"><use href="#i-fold-start"/></svg>
<svg class="b" style="left:575px;top:631px;" width="9" height="12"><use href="#i-fold-end"/></svg>
<span class="t u" style="left:552.5px;top:333.5px;height:20px;line-height:20px;color:#c4c6c8;font-size:11.5px">@</span>
<div class="b" style="left:705px;top:186px;width:104px;height:21px;background:#52503a;"></div>
<div class="b" style="left:705px;top:207px;width:72px;height:21px;background:#52503a;"></div>
<div class="b" style="left:649px;top:228px;width:56px;height:21px;background:#52503a;"></div>
<div class="b" style="left:516px;top:85px;width:1384px;height:578px;overflow:hidden">
<div class="cl" style="left:69px;top:-3.6px">        }</div>
<div class="cl" style="left:69px;top:17.4px">    }</div>
<div class="cl" style="left:69px;top:38.4px"></div>
<div class="cl" style="left:69px;top:59.4px"><span class="dc">    /**</span></div>
<div class="cl" style="left:69px;top:80.4px"><span class="dc">      * </span><span class="dc"><span class="cj">获取城市当前天气</span></span></div>
<div class="cl" style="left:69px;top:101.4px"><span class="dc">      * </span><span class="dt">@param</span><span class="dc"> </span><span class="dp">cecCdLocation</span></div>
<div class="cl" style="left:69px;top:122.4px"><span class="dc">      * </span><span class="dt">@param</span><span class="dc"> </span><span class="dp">urlFormat</span></div>
<div class="cl" style="left:69px;top:143.4px"><span class="dc">      * </span><span class="dt hl">@throws</span></div>
<div class="cl" style="left:69px;top:164.4px"><span class="dc">      * </span><span class="dt">@return</span><span class="dc"> cec.</span><span class="dc wv">saas</span><span class="dc">.common.data.location.entity.CecCdWeather</span></div>
<div class="cl" style="left:69px;top:185.4px"><span class="dc">      * </span><span class="dt">@author</span><span class="dc"> zhy</span></div>
<div class="cl" style="left:69px;top:206.4px"><span class="dc">      * </span><span class="dt">@date</span><span class="dc"> 2022/5/7 10:50</span></div>
<div class="cl" style="left:69px;top:227.4px"><span class="dc">      */</span></div>
<div class="cl" style="left:69px;top:248.4px">    <span class="k">private</span> CecCdWeather <span class="fn">getNowWeather</span>(CecCdLocation cecCdLocation<span class="k">,</span>String urlFormat){</div>
<div class="cl" style="left:69px;top:269.4px">        <span class="k">try</span> {</div>
<div class="cl" style="left:69px;top:290.4px">            <span class="k">if</span> (StringUtils.<span class="it">isBlank</span>(cecCdLocation.getWeatherLocationId())){</div>
<div class="cl" style="left:69px;top:311.4px">                <span class="k">return null;</span></div>
<div class="cl" style="left:69px;top:332.4px">            }</div>
<div class="cl" style="left:69px;top:353.4px">            Thread.<span class="it">sleep</span>(</div>
<div class="cl" style="left:69px;top:374.4px">            String url = String.<span class="it">format</span>(urlFormat<span class="k">,</span>cecCdLocation.getWeatherLocationId())<span class="k">;</span></div>
<div class="cl" style="left:69px;top:395.4px">            String s = HttpUtil.<span class="it">get</span>(url)<span class="k">;</span></div>
<div class="cl" style="left:69px;top:416.4px">            QweatherResultVO qweatherResultVO = JSON.<span class="it">parseObject</span>(s<span class="k">,</span> QweatherResultVO.<span class="k">class</span>)<span class="k">;</span></div>
<div class="cl" style="left:69px;top:437.4px">            QweatherNowResultVO now = qweatherResultVO.getNow()<span class="k">;</span></div>
<div class="cl" style="left:69px;top:458.4px">            <span class="k">return</span> now.asByCecCdWeatherResult()<span class="k">;</span></div>
<div class="cl" style="left:69px;top:479.4px">        }<span class="k">catch</span> (Exception e){</div>
<div class="cl" style="left:69px;top:500.4px">            <span class="sf">log</span>.error(<span class="st">"</span><span class="st"><span class="cj">获取城市天气失败，</span></span><span class="st">{}"</span><span class="k">,</span>cecCdLocation)<span class="k">;</span></div>
<div class="cl" style="left:69px;top:521.4px">            <span class="sf">log</span>.error(<span class="st">""</span><span class="k">,</span>e)<span class="k">;</span></div>
<div class="cl" style="left:69px;top:542.4px">        }</div>
<div class="cl" style="left:69px;top:563.4px">        <span class="k">return null;</span></div>
<div class="b" style="left:271px;top:355px;width:43px;height:17px;background:#363738;border-radius:4px"></div>
<div class="cl" style="left:316px;top:353.4px"><span class="nu">500</span>)<span class="k">;</span></div>
</div>
<span class="t u" style="left:793px;top:437.5px;height:20px;line-height:20px;letter-spacing:0.286px;color:#787878;font-size:12px">millis:</span>
<div class="b" style="left:1887px;top:87px;width:10px;height:10px;background:#c9961a;"></div>
<div class="b" style="left:1885px;top:111px;width:14px;height:2px;background:#c9961a;"></div>
<div class="b" style="left:1885px;top:163px;width:14px;height:2px;background:#7d7450;"></div>
<div class="b" style="left:1885px;top:178px;width:14px;height:2px;background:#7d7450;"></div>
<div class="b" style="left:1885px;top:194px;width:14px;height:2px;background:#7d7450;"></div>
<div class="b" style="left:1890px;top:273px;width:8px;height:141px;background:rgba(128,128,128,0.35);"></div>
<div class="b" style="left:1885px;top:297px;width:14px;height:2px;background:#c9961a;"></div>
<div class="b" style="left:1885px;top:303px;width:14px;height:2px;background:#c9961a;"></div>
<div class="b" style="left:1885px;top:308px;width:14px;height:2px;background:#c9961a;"></div>
<div class="b" style="left:1885px;top:442px;width:14px;height:2px;background:#c9961a;"></div>
<div class="b" style="left:1885px;top:447px;width:14px;height:2px;background:#c9961a;"></div>
<div class="b" style="left:1885px;top:453px;width:14px;height:2px;background:#c9961a;"></div>
<div class="b" style="left:516px;top:663px;width:1384px;height:25px;background:#313335;"></div>
<div class="b" style="left:516px;top:663px;width:1384px;height:1px;background:#37393b;"></div>
<span class="t u" style="left:589px;top:665.5px;height:20px;line-height:20px;letter-spacing:0.370px;">CecCdWeatherServiceImpl</span>
<span class="t u" style="left:752px;top:665.0px;height:20px;line-height:20px;color:#8a8d8f;font-size:13px">›</span>
<span class="t u" style="left:766px;top:665.5px;height:20px;line-height:20px;letter-spacing:0.611px;">getNowWeather()</span>
<div class="b" style="left:1900px;top:58px;width:13px;height:939px;background:#3c3f41;"></div>
<div class="b" style="left:1899px;top:58px;width:1px;height:939px;background:#323232;"></div>
<span class="t u" style="left:1902px;top:64.0px;height:20px;line-height:20px;font-style:italic;font-weight:bold;font-size:15px;color:#c4c6c8">m</span>
<span class="t u" style="left:1919px;top:87px;height:20px;line-height:20px;transform-origin:0 0;transform:rotate(90deg);letter-spacing:-0.606px;">Maven</span>
<svg class="b" style="left:1901px;top:148px" width="14" height="14" viewBox="0 0 14 14"><path d="M1,9 L6,1 L13,3 L8,12 Z M4,8 L9,5" fill="none" stroke="#1ba5c6" stroke-width="1.4"/></svg>
<span class="t u" style="left:1919px;top:166px;height:20px;line-height:20px;transform-origin:0 0;transform:rotate(90deg);letter-spacing:-0.018px;">Alibaba Function Compute</span>
<svg class="b" style="left:1902px;top:333px" width="12" height="13" viewBox="0 0 12 13"><path d="M0,2 H12 M0,5 H12 M0,8 H12 M0,11 H12" stroke="#afb1b3" stroke-width="2"/></svg>
<span class="t u" style="left:1919px;top:350px;height:20px;line-height:20px;transform-origin:0 0;transform:rotate(90deg);letter-spacing:-0.297px;">Database</span>
<svg class="b" style="left:1901px;top:425px" width="14" height="13" viewBox="0 0 14 13"><circle cx="5" cy="4.5" r="3.3" fill="none" stroke="#1ba5c6" stroke-width="1.3"/><circle cx="7.5" cy="8" r="3.3" fill="none" stroke="#1ba5c6" stroke-width="1.3"/></svg>
<span class="t u" style="left:1919px;top:443px;height:20px;line-height:20px;transform-origin:0 0;transform:rotate(90deg);letter-spacing:-0.295px;">Alibaba ROS Templates</span>
<svg class="b" style="left:1902px;top:588px" width="12" height="12" viewBox="0 0 12 12"><ellipse cx="6" cy="3" rx="2" ry="1.8" fill="#9a9c9e"/><ellipse cx="6" cy="6.2" rx="1.6" ry="1.6" fill="#9a9c9e"/><ellipse cx="6" cy="9.6" rx="2.3" ry="2.2" fill="#9a9c9e"/><path d="M1,2 L4.5,5.5 M11,2 L7.5,5.5 M0.5,7 L4.5,6.4 M11.5,7 L7.5,6.4 M1.5,11.5 L4.6,7.4 M10.5,11.5 L7.4,7.4" stroke="#9a9c9e" stroke-width="0.9" fill="none"/></svg>
<span class="t u" style="left:1919px;top:604px;height:20px;line-height:20px;transform-origin:0 0;transform:rotate(90deg);letter-spacing:0.328px;">Ant</span>
<svg class="b" style="left:1901px;top:649px" width="14" height="12" viewBox="0 0 14 12"><path d="M4,1.5 H2.5 A1.5,1.5 0 0 0 1,3 V9 A1.5,1.5 0 0 0 2.5,10.5 H4 M8,1.5 H9.5 A1.5,1.5 0 0 1 11,3 V9 A1.5,1.5 0 0 1 9.5,10.5 H8" fill="none" stroke="#1e9be0" stroke-width="1.6"/></svg>
<span class="t u" style="left:1919px;top:667px;height:20px;line-height:20px;transform-origin:0 0;transform:rotate(90deg);letter-spacing:-0.145px;">Alibaba Log Console</span>
<svg class="b" style="left:1902px;top:801px" width="13" height="13" viewBox="0 0 13 13"><circle cx="6.5" cy="6.5" r="6" fill="#afb1b3"/><path d="M2,8 C5,8 7,6 8,2" stroke="#3c3f41" stroke-width="1.5" fill="none"/></svg>
<span class="t u" style="left:1919px;top:818px;height:20px;line-height:20px;transform-origin:0 0;transform:rotate(90deg);letter-spacing:-0.212px;">Bean Validation</span>
<div class="b" style="left:1688px;top:587px;width:185px;height:22px;background:#ffffff;box-shadow:0 0 0 1px rgba(20,20,20,0.5)"></div>
<svg class="b" style="left:1662px;top:579px" width="36" height="36" viewBox="0 0 36 36"><defs><linearGradient id="sg" x1="0" y1="0" x2="0" y2="1"><stop offset="0" stop-color="#f8662c"/><stop offset="1" stop-color="#e5360c"/></linearGradient></defs><rect x="6" y="6" width="24" height="24" rx="3.5" fill="url(#sg)" transform="rotate(-13 18 18)"/></svg>
<span class="t u" style="left:1669.5px;top:585.0px;height:24px;line-height:24px;color:#fff;font-weight:bold;font-style:italic;font-size:23px;transform:scale(1.18,0.92) rotate(-8deg);transform-origin:50% 50%">S</span>
<span class="t u" style="left:1699px;top:588.0px;height:20px;line-height:20px;color:#1b6fd6;font-weight:bold;font-size:15px;font-family:'Liberation Sans','Noto Sans CJK SC',sans-serif">英</span>
<svg class="b" style="left:1722px;top:591px" width="14" height="14" viewBox="0 0 14 14"><circle cx="3.2" cy="4" r="1.7" fill="#1b6fd6"/><path d="M8.2,4.6 C10.6,4.6 10.6,8.6 7.6,10.2" fill="none" stroke="#1b6fd6" stroke-width="1.7" stroke-linecap="round"/></svg>
<svg class="b" style="left:1742px;top:589px" width="18" height="18" viewBox="0 0 18 18"><circle cx="9" cy="9" r="7.2" fill="none" stroke="#1b6fd6" stroke-width="1.6"/><path d="M6.6,5.6 V8.4 M11.4,5.6 V8.4" stroke="#1b6fd6" stroke-width="1.5"/><path d="M5.2,10.6 A4,4 0 0 0 12.8,10.6" fill="none" stroke="#1b6fd6" stroke-width="1.4"/></svg>
<svg class="b" style="left:1766px;top:590px" width="14" height="17" viewBox="0 0 14 17"><rect x="4.2" y="0.5" width="5.6" height="10" rx="2.8" fill="#1b6fd6"/><path d="M1.8,7.5 A5.2,5.2 0 0 0 12.2,7.5 M7,12.8 V15.4 M4,15.8 H10" fill="none" stroke="#1b6fd6" stroke-width="1.5"/></svg>
<svg class="b" style="left:1787px;top:592px" width="17" height="12" viewBox="0 0 17 12"><rect x="0" y="0" width="17" height="12" rx="1.8" fill="#1b6fd6"/><path d="M2.4,3.2 H14.6 M2.4,5.8 H14.6" stroke="#fff" stroke-width="1.5" stroke-dasharray="1.5 1.2"/><path d="M4.5,8.8 H12.5" stroke="#fff" stroke-width="1.5"/></svg>
<svg class="b" style="left:1811px;top:590px" width="19" height="17" viewBox="0 0 19 17"><circle cx="6.5" cy="4.2" r="3.3" fill="#b4c3d8"/><path d="M0.5,13.5 C0.5,9.5 3,7.8 6.5,7.8 C8,7.8 9,8.2 10,9 V13.5 Z" fill="#b4c3d8"/><rect x="5.5" y="10" width="13" height="6.5" rx="1.2" fill="#c3cfe0" stroke="#fff" stroke-width="0.6"/></svg>
<span class="t u" style="left:1818px;top:600.0px;height:8px;line-height:8px;color:#fff;font-size:7.5px;font-weight:bold">26</span>
<svg class="b" style="left:1832px;top:590px" width="15" height="15" viewBox="0 0 15 15"><path d="M4.5,0.8 L0.5,3.5 L2,7 L3.8,6.2 V14.2 H11.2 V6.2 L13,7 L14.5,3.5 L10.5,0.8 C9.5,2.6 5.5,2.6 4.5,0.8 Z" fill="#1b6fd6"/></svg>
<svg class="b" style="left:1853px;top:591px" width="14" height="14" viewBox="0 0 14 14"><rect x="0.5" y="0.5" width="5.6" height="5.6" fill="#1b6fd6"/><rect x="8.2" y="0.9" width="4.8" height="4.8" fill="none" stroke="#1b6fd6" stroke-width="1.3"/><rect x="0.5" y="7.9" width="5.6" height="5.6" fill="#1b6fd6"/><rect x="7.9" y="7.9" width="5.6" height="5.6" fill="#1b6fd6"/></svg>
<div class="b" style="left:22px;top:687px;width:494px;height:1px;background:#323232;"></div>
<div class="b" style="left:22px;top:688px;width:1878px;height:309px;background:#3c3f41;"></div>
<div class="b" style="left:22px;top:714px;width:1878px;height:1px;background:#323232;"></div>
<span class="t u" style="left:28px;top:691.5px;height:20px;line-height:20px;letter-spacing:0.230px;">SonarLint:</span>
<span class="t u" style="left:104px;top:691.5px;height:20px;line-height:20px;letter-spacing:0.443px;">Current file</span>
<span class="t u" style="left:192px;top:691.5px;height:20px;line-height:20px;letter-spacing:0.661px;">Report</span>
<span class="t u" style="left:256px;top:691.5px;height:20px;line-height:20px;letter-spacing:0.656px;">Log</span>
<div class="b" style="left:180px;top:712px;width:64px;height:3px;background:#747a80;"></div>
<svg class="b" style="left:1853px;top:694px;" width="14" height="14"><use href="#i-gear"/></svg>
<div class="b" style="left:1880px;top:700px;width:12px;height:2px;background:#afb1b3;"></div>
<div class="b" style="left:50px;top:715px;width:1px;height:282px;background:#323232;"></div>
<svg class="b" style="left:28px;top:723px" width="15" height="15" viewBox="0 0 15 15"><path d="M3.4,3.5 L7.4,9 L11.5,3.5 M7.4,9 V10.8" stroke="#5c5f61" stroke-width="2" fill="none"/><circle cx="3.4" cy="3.5" r="2.5" fill="#5c5f61"/><circle cx="11.5" cy="3.5" r="2.5" fill="#5c5f61"/><circle cx="7.4" cy="10.8" r="2.5" fill="#5c5f61"/></svg>
<svg class="b" style="left:28px;top:749px" width="17" height="15" viewBox="0 0 17 15"><path d="M1,2 H6.4 L7.8,4 H14.6 V13 H1 Z" fill="#87939a"/><rect x="9.4" y="7.6" width="7" height="6.6" rx="0.8" fill="#1c1d1e"/><rect x="11" y="11" width="3.6" height="1.5" fill="#fff"/></svg>
<div class="b" style="left:30px;top:776px;width:12px;height:12px;background:#5a5a5a;"></div>
<svg class="b" style="left:28px;top:800px" width="16" height="16" viewBox="0 0 16 16"><path d="M0.8,6 L6.2,0.8 L8.6,3.2 L3.2,8.4 Z" fill="#3592c4"/><path d="M3.6,13.6 L11,6.4" stroke="#a8aaac" stroke-width="2.2" fill="none"/><path d="M10.2,7 A2.6,2.6 0 1 0 13.8,3.6 L12,5.4 L10.8,4.2 L12.6,2.4 A2.6,2.6 0 0 0 10.2,7 Z" fill="#a8aaac"/><circle cx="3.6" cy="13.4" r="1.9" fill="#a8aaac"/><circle cx="3.6" cy="13.4" r="0.7" fill="#3c3f41"/><path d="M8,8.6 L13.6,14" stroke="#a8aaac" stroke-width="1.8" fill="none"/></svg>
<svg class="b" style="left:30px;top:827px" width="12" height="12" viewBox="0 0 12 12"><circle cx="6" cy="6" r="5.4" fill="#6a6c6e"/><path d="M3.6,3.6 L8.4,8.4 M8.4,3.6 L3.6,8.4" stroke="#45474a" stroke-width="1.2"/></svg>
<span class="t u" style="left:54px;top:715.5px;height:20px;line-height:20px;letter-spacing:0.368px;">Found 17 issues in 9 files</span>
<svg class="b" style="left:54px;top:740.0px;" width="10" height="10"><use href="#i-down"/></svg>
<svg class="b" style="left:72px;top:738.0px;" width="16" height="16"><use href="#i-jfile"/></svg>
<span class="t u" style="left:90px;top:735.5px;height:20px;line-height:20px;letter-spacing:0.255px;">CecCdAirServiceImpl.java</span>
<span class="t u bd" style="left:242.5px;top:735.5px;height:20px;line-height:20px;letter-spacing:0.114px;color:#8c8e90">(3 issues)</span>
<svg class="b" style="left:89px;top:760.0px;" width="12" height="12"><use href="#i-sev"/></svg>
<svg class="b" style="left:105px;top:760.0px;" width="12" height="12"><use href="#i-minor"/></svg>
<span class="t u" style="left:121px;top:755.5px;height:20px;line-height:20px;letter-spacing:-0.086px;color:#8c8e90">(4, 0)</span>
<span class="t u" style="left:153px;top:755.5px;height:20px;line-height:20px;letter-spacing:0.573px;">Remove this unused import </span>
<span class="t u" style="left:317.3px;top:755.5px;height:20px;line-height:20px;letter-spacing:0.362px;">'cec.saas.common.data.location.entity.CecCdLocation'.</span>
<svg class="b" style="left:89px;top:780.0px;" width="12" height="12"><use href="#i-sev"/></svg>
<svg class="b" style="left:105px;top:780.0px;" width="12" height="12"><use href="#i-minor"/></svg>
<span class="t u" style="left:121px;top:775.5px;height:20px;line-height:20px;letter-spacing:-0.086px;color:#8c8e90">(6, 0)</span>
<span class="t u" style="left:153px;top:775.5px;height:20px;line-height:20px;letter-spacing:0.573px;">Remove this unused import </span>
<span class="t u" style="left:317.3px;top:775.5px;height:20px;line-height:20px;letter-spacing:0.479px;">'cec.saas.common.data.location.mapper.CecCdLocationMapper'.</span>
<svg class="b" style="left:89px;top:800.0px;" width="12" height="12"><use href="#i-sev"/></svg>
<svg class="b" style="left:105px;top:800.0px;" width="12" height="12"><use href="#i-minor"/></svg>
<span class="t u" style="left:121px;top:795.5px;height:20px;line-height:20px;letter-spacing:-0.086px;color:#8c8e90">(8, 0)</span>
<span class="t u" style="left:153px;top:795.5px;height:20px;line-height:20px;letter-spacing:0.573px;">Remove this unused import </span>
<span class="t u" style="left:317.3px;top:795.5px;height:20px;line-height:20px;letter-spacing:0.311px;">'cec.saas.common.data.location.service.CecCdLocationService'.</span>
<svg class="b" style="left:54px;top:820.0px;" width="10" height="10"><use href="#i-down"/></svg>
<svg class="b" style="left:72px;top:818.0px;" width="16" height="16"><use href="#i-jfile"/></svg>
<span class="t u" style="left:90px;top:815.5px;height:20px;line-height:20px;letter-spacing:0.307px;">CecCdLocationServiceImpl.java</span>
<span class="t u bd" style="left:275.5px;top:815.5px;height:20px;line-height:20px;letter-spacing:0.114px;color:#8c8e90">(2 issues)</span>
<svg class="b" style="left:89px;top:840.0px;" width="12" height="12"><use href="#i-sev"/></svg>
<svg class="b" style="left:105px;top:840.0px;" width="12" height="12"><use href="#i-minor"/></svg>
<span class="t u" style="left:121px;top:835.5px;height:20px;line-height:20px;letter-spacing:-0.027px;color:#8c8e90">(13, 0)</span>
<span class="t u" style="left:160px;top:835.5px;height:20px;line-height:20px;letter-spacing:0.573px;">Remove this unused import </span>
<span class="t u" style="left:324.3px;top:835.5px;height:20px;line-height:20px;letter-spacing:0.573px;">'com.baomidou.mybatisplus.core.conditions.Wrapper'.</span>
<svg class="b" style="left:89px;top:860.0px;" width="12" height="12"><use href="#i-sev"/></svg>
<svg class="b" style="left:105px;top:860.0px;" width="12" height="12"><use href="#i-minor"/></svg>
<span class="t u" style="left:121px;top:855.5px;height:20px;line-height:20px;letter-spacing:-0.027px;color:#8c8e90">(15, 0)</span>
<span class="t u" style="left:160px;top:855.5px;height:20px;line-height:20px;letter-spacing:0.573px;">Remove this unused import </span>
<span class="t u" style="left:324.3px;top:855.5px;height:20px;line-height:20px;letter-spacing:0.498px;">'com.baomidou.mybatisplus.extension.service.additional.query.impl.LambdaQueryChainWrapper'.</span>
<svg class="b" style="left:54px;top:880.0px;" width="10" height="10"><use href="#i-down"/></svg>
<svg class="b" style="left:72px;top:878.0px;" width="16" height="16"><use href="#i-jfile"/></svg>
<span class="t u" style="left:90px;top:875.5px;height:20px;line-height:20px;letter-spacing:0.294px;">CecCdWeather.java</span>
<span class="t u bd" style="left:208.5px;top:875.5px;height:20px;line-height:20px;letter-spacing:0.114px;color:#8c8e90">(2 issues)</span>
<svg class="b" style="left:89px;top:900.0px;" width="12" height="12"><use href="#i-sev"/></svg>
<svg class="b" style="left:105px;top:900.0px;" width="12" height="12"><use href="#i-minor"/></svg>
<span class="t u" style="left:121px;top:895.5px;height:20px;line-height:20px;letter-spacing:-0.086px;color:#8c8e90">(3, 0)</span>
<span class="t u" style="left:153px;top:895.5px;height:20px;line-height:20px;letter-spacing:0.573px;">Remove this unused import </span>
<span class="t u" style="left:317.3px;top:895.5px;height:20px;line-height:20px;letter-spacing:0.392px;">'cn.hutool.core.date.DatePattern'.</span>
<span class="t u" style="left:512.5px;top:895.5px;height:20px;line-height:20px;letter-spacing:0.711px;color:#8c8e90">1 hour ago</span>
<svg class="b" style="left:89px;top:920.0px;" width="12" height="12"><use href="#i-sev"/></svg>
<svg class="b" style="left:105px;top:920.0px;" width="12" height="12"><use href="#i-minor"/></svg>
<span class="t u" style="left:121px;top:915.5px;height:20px;line-height:20px;letter-spacing:-0.086px;color:#8c8e90">(6, 0)</span>
<span class="t u" style="left:153px;top:915.5px;height:20px;line-height:20px;letter-spacing:0.573px;">Remove this unused import </span>
<span class="t u" style="left:317.3px;top:915.5px;height:20px;line-height:20px;letter-spacing:0.402px;">'com.fasterxml.jackson.annotation.JsonFormat'.</span>
<span class="t u" style="left:593px;top:915.5px;height:20px;line-height:20px;letter-spacing:0.711px;color:#8c8e90">1 hour ago</span>
<svg class="b" style="left:54px;top:940.0px;" width="10" height="10"><use href="#i-down"/></svg>
<svg class="b" style="left:72px;top:938.0px;" width="16" height="16"><use href="#i-jfile"/></svg>
<span class="t u" style="left:90px;top:935.5px;height:20px;line-height:20px;letter-spacing:0.303px;">CecCdWeatherApi001.java</span>
<span class="t u bd" style="left:248.5px;top:935.5px;height:20px;line-height:20px;letter-spacing:0.114px;color:#8c8e90">(3 issues)</span>
<svg class="b" style="left:89px;top:960.0px;" width="12" height="12"><use href="#i-sev"/></svg>
<svg class="b" style="left:105px;top:960.0px;" width="12" height="12"><use href="#i-minor"/></svg>
<span class="t u" style="left:121px;top:955.5px;height:20px;line-height:20px;letter-spacing:-0.086px;color:#8c8e90">(4, 0)</span>
<span class="t u" style="left:153px;top:955.5px;height:20px;line-height:20px;letter-spacing:0.573px;">Remove this unused import </span>
<span class="t u" style="left:317.3px;top:955.5px;height:20px;line-height:20px;letter-spacing:0.311px;">'cec.saas.common.data.location.service.CecCdLocationService'.</span>
<span class="t u" style="left:53px;top:976.5px;height:20px;line-height:20px;letter-spacing:0.505px;">Analysis of 68 files done few seconds ago</span>
<div class="b" style="left:1239px;top:716px;width:8px;height:124px;background:#595b5d;"></div>
<span class="t u" style="left:1268px;top:719.5px;height:20px;line-height:20px;letter-spacing:0.078px;">Rule</span>
<span class="t u" style="left:1319px;top:719.5px;height:20px;line-height:20px;letter-spacing:0.403px;">Locations</span>
<div class="b" style="left:1255px;top:746px;width:637px;height:1px;background:#323232;"></div>
<div class="b" style="left:1255px;top:744px;width:51px;height:3px;background:#4a88c7;"></div>
<div class="b" style="left:1263px;top:752px;width:628px;height:240px;border:1px solid #323232;box-sizing:border-box"></div>
<span class="t u" style="left:1438px;top:862.5px;height:20px;line-height:20px;letter-spacing:0.483px;">Select an issue to see extended rule description</span>
<div class="b" style="left:1552px;top:925px;width:340px;height:64px;background:#4e5254;border:1px solid #5a5d5f;box-sizing:border-box;box-shadow:0 2px 5px rgba(0,0,0,0.35)"></div>
<svg class="b" style="left:1562px;top:937px" width="15" height="15" viewBox="0 0 15 15"><circle cx="7.5" cy="7.5" r="7" fill="#3a95d2"/><rect x="6.6" y="6.3" width="1.9" height="5" fill="#2b2b2b"/><rect x="6.6" y="3.3" width="1.9" height="1.9" fill="#2b2b2b"/></svg>
<div class="b" style="left:1584px;top:934px;width:279px;height:22px;overflow:hidden">
<span class="t u bd" style="left:0px;top:0.5px;height:20px;line-height:20px;letter-spacing:0.501px;color:#c8c8c8">Alibaba cloud toolkit 2021.9.1-193 is available</span>
</div>
<span class="t u" style="left:1584px;top:956.5px;height:20px;line-height:20px;letter-spacing:0.633px;color:#589df6">Update</span>
<span class="t u" style="left:1631px;top:956.5px;height:20px;line-height:20px;letter-spacing:0.828px;">Or</span>
<span class="t u" style="left:1650px;top:956.5px;height:20px;line-height:20px;letter-spacing:0.828px;color:#589df6">Ignore</span>
<div class="b" style="left:0px;top:997px;width:1913px;height:1px;background:#323232;"></div>
<div class="b" style="left:0px;top:998px;width:1913px;height:21px;background:#3c3f41;"></div>
<div class="b" style="left:339px;top:998px;width:88px;height:21px;background:#2d2f30;"></div>
<svg class="b" style="left:34px;top:1005px" width="11" height="10" viewBox="0 0 11 10"><path d="M0,1.5 H2 M3.5,1.5 H11 M0,5 H2 M3.5,5 H11 M0,8.5 H2 M3.5,8.5 H11" stroke="#afb1b3" stroke-width="1.5"/></svg>
<span class="t u s" style="left:49px;top:1000.0px;height:20px;line-height:20px;letter-spacing:-0.513px;"><u>6</u>: TODO</span>
<svg class="b" style="left:114px;top:1004px" width="13" height="12" viewBox="0 0 13 12"><path d="M0.5,8 C0.5,3 5,1 12.5,0.5 C12.5,7 8,12 2,10.5 Z" fill="#afb1b3"/></svg>
<span class="t u s" style="left:131px;top:1000.0px;height:20px;line-height:20px;letter-spacing:-0.115px;">Spring</span>
<svg class="b" style="left:185px;top:1004px" width="12" height="12" viewBox="0 0 12 12"><rect x="0" y="0" width="12" height="12" fill="#afb1b3"/><path d="M2.5,3 L5.5,5.5 L2.5,8 M6.5,8.5 H9.5" stroke="#3c3f41" stroke-width="1.3" fill="none"/></svg>
<span class="t u s" style="left:202px;top:1000.0px;height:20px;line-height:20px;letter-spacing:-0.045px;">Terminal</span>
<svg class="b" style="left:269px;top:1003px" width="14" height="14" viewBox="0 0 14 14"><circle cx="7" cy="7" r="5.8" fill="none" stroke="#8a8d8f" stroke-width="1.3"/><path d="M7,1 V7 H13" fill="none" stroke="#8a8d8f" stroke-width="1.3"/></svg>
<span class="t u s" style="left:288px;top:1000.0px;height:20px;line-height:20px;letter-spacing:-0.113px;">Statistic</span>
<svg class="b" style="left:349px;top:1003px" width="14" height="14" viewBox="0 0 14 14"><circle cx="7" cy="7" r="6" fill="none" stroke="#d1353f" stroke-width="1.4"/><path d="M1.5,7 C4,5.5 10,8.5 12.5,7" fill="none" stroke="#d1353f" stroke-width="1.2"/></svg>
<span class="t u s" style="left:367px;top:1000.0px;height:20px;line-height:20px;letter-spacing:-0.153px;color:#e8e8e8">SonarLint</span>
<svg class="b" style="left:438px;top:1004px" width="13" height="12" viewBox="0 0 13 12"><path d="M6.5,0.5 L12.5,11.5 H0.5 Z" fill="#afb1b3"/><path d="M6.5,4.5 V8 M6.5,9 V10.3" stroke="#3c3f41" stroke-width="1.3"/></svg>
<span class="t u s" style="left:455px;top:1000.0px;height:20px;line-height:20px;letter-spacing:-0.211px;">Problems</span>
<svg class="b" style="left:527px;top:1004px" width="12" height="12" viewBox="0 0 12 12"><path d="M0.5,0.5 H9 V3 M0.5,0.5 V11.5 H3" fill="none" stroke="#afb1b3" stroke-width="1.3"/><rect x="4" y="4" width="8" height="8" fill="#afb1b3"/><path d="M6,6 V10 M8,6 V10 M10,6 V10" stroke="#3c3f41" stroke-width="0.9"/></svg>
<span class="t u s" style="left:543px;top:1000.0px;height:20px;line-height:20px;letter-spacing:-0.425px;">Java Enterprise</span>
<svg class="b" style="left:644px;top:1003px" width="14" height="14" viewBox="0 0 14 14"><path d="M4,0.5 H10 L13.5,4 V10 L10,13.5 H4 L0.5,10 V4 Z" fill="#afb1b3"/><path d="M5,3.8 L10,7 L5,10.2 Z" fill="#3c3f41"/></svg>
<span class="t u s" style="left:660px;top:1000.0px;height:20px;line-height:20px;letter-spacing:-0.398px;"><u>8</u>: Services</span>
<svg class="b" style="left:739px;top:1004px" width="15" height="12" viewBox="0 0 15 12"><path d="M5,1.2 H2.5 A1.5,1.5 0 0 0 1,2.7 V9.3 A1.5,1.5 0 0 0 2.5,10.8 H5 M10,1.2 H12.5 A1.5,1.5 0 0 1 14,2.7 V9.3 A1.5,1.5 0 0 1 12.5,10.8 H10 M5.5,6 H9.5" fill="none" stroke="#1e9be0" stroke-width="1.7"/></svg>
<span class="t u s" style="left:759px;top:1000.0px;height:20px;line-height:20px;letter-spacing:-0.103px;">Alibaba Cloud View</span>
<svg class="b" style="left:1700px;top:1003px" width="14" height="14" viewBox="0 0 14 14"><circle cx="7" cy="7" r="6.8" fill="#499c54"/></svg>
<span class="t u" style="left:1704px;top:1000.0px;height:20px;line-height:20px;color:#fff;font-size:10px;font-weight:bold">2</span>
<span class="t u s" style="left:1718px;top:1000.0px;height:20px;line-height:20px;letter-spacing:-0.283px;">Event Log</span>
<svg class="b" style="left:1792px;top:1002px;" width="16" height="16"><use href="#i-jr"/></svg>
<span class="t u s" style="left:1809.5px;top:1000.0px;height:20px;line-height:20px;letter-spacing:-0.444px;">JRebel Console</span>
<div class="b" style="left:0px;top:1019px;width:1913px;height:1px;background:#484a4c;"></div>
<div class="b" style="left:0px;top:1020px;width:1913px;height:20px;background:#3c3f41;"></div>
<div class="b" style="left:0px;top:1040px;width:392px;height:1px;background:#5a5d5f;"></div>
<div class="b" style="left:392px;top:1040px;width:1521px;height:1px;background:#c8c8c8;"></div>
<svg class="b" style="left:5px;top:1023px" width="13" height="13" viewBox="0 0 13 13"><path d="M3.5,0.5 H12.5 V9.5 M0.5,3 H10 V12.5 H0.5 Z" fill="none" stroke="#afb1b3" stroke-width="1"/></svg>
<span class="t u" style="left:27.5px;top:1019.7px;height:20px;line-height:20px;letter-spacing:0.370px;">IntelliJ IDEA 2019.3.5 available: // Update... (today 8:57)</span>
<span class="t u" style="left:1657px;top:1019.7px;height:20px;line-height:20px;letter-spacing:0.194px;">69:86</span>
<span class="t u" style="left:1700px;top:1019.7px;height:20px;line-height:20px;letter-spacing:-0.836px;">CRLF</span>
<span class="t u" style="left:1740.5px;top:1019.7px;height:20px;line-height:20px;letter-spacing:-0.100px;">UTF-8</span>
<span class="t u" style="left:1786px;top:1019.7px;height:20px;line-height:20px;letter-spacing:0.309px;">4 spaces</span>
<svg class="b" style="left:1847px;top:1022px" width="13" height="14" viewBox="0 0 13 14"><rect x="3" y="6.5" width="10" height="7" fill="#afb1b3"/><path d="M1,6 V4 A2.5,2.5 0 0 1 6,4 V6.5" fill="none" stroke="#afb1b3" stroke-width="1.4"/></svg>
<svg class="b" style="left:1871px;top:1022px" width="15" height="15" viewBox="0 0 15 15"><path d="M3,5 L4,0.8 H11 L12,5 Z" fill="#afb1b3"/><rect x="0.5" y="5" width="14" height="1.6" fill="#afb1b3"/><path d="M3,7.5 H12 V11 L10,14.5 H5 L3,11 Z" fill="#afb1b3"/><rect x="4.2" y="8.3" width="2.6" height="2" fill="#3c3f41"/><rect x="8.2" y="8.3" width="2.6" height="2" fill="#3c3f41"/></svg>
<svg class="b" style="left:1894px;top:1022px" width="19" height="16" viewBox="0 0 19 16"><path d="M4,11 A3.2,3.2 0 0 1 4,4.6 A4.2,4.2 0 0 1 12,3.6 A3.6,3.6 0 0 1 13.5,10.5 H4 Z" fill="#afb1b3"/><path d="M7,4.5 A1.6,1.6 0 1 1 8.2,7 V8.2 M8.2,9.2 V10.2" stroke="#3c3f41" stroke-width="1.1" fill="none"/><circle cx="14" cy="12" r="3" fill="#3c3f41"/><circle cx="14" cy="12" r="2" fill="none" stroke="#afb1b3" stroke-width="1.4"/></svg>
<svg class="b" style="left:0;top:0;pointer-events:none" width="1913" height="1041"><polygon points="397.9,545.4 249.8,678.5 248.5,674.2 242.8,691.5 260.5,686.9 256.3,685.4 398.7,546.2" fill="#fc2115"/><polygon points="815.8,452.8 431.0,979.2 428.8,975.1 426.5,993.2 443.0,985.3 438.3,984.5 816.8,453.6" fill="#fc2115"/></svg>
</body></html>
